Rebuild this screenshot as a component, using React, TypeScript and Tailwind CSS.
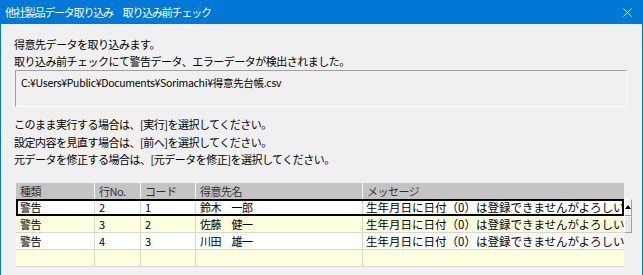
import { X } from 'lucide-react';

const rows = [
  { kind: '警告', line: '2', code: '1', name: '鈴木　一郎', msg: '生年月日に日付（0）は登録できませんがよろしい', selected: true },
  { kind: '警告', line: '3', code: '2', name: '佐藤　健一', msg: '生年月日に日付（0）は登録できませんがよろしい' },
  { kind: '警告', line: '4', code: '3', name: '川田　雄一', msg: '生年月日に日付（0）は登録できませんがよろしい' },
  { kind: '', line: '', code: '', name: '', msg: '' },
];

const font = { fontFamily: '"Noto Sans CJK JP", "Liberation Sans", sans-serif' };

export default function App() {
  return (
    <div className="w-[643px] h-[275px] overflow-hidden bg-[#0078d7] flex flex-col text-[11px] tracking-[-0.5px] text-black" style={font}>
      <div className="h-[24px] shrink-0 flex items-center justify-between pl-[5px] pr-[8px] text-white text-[11px] tracking-[-1.2px]">
        <span className="leading-none">他社製品データ取り込み　取り込み前チェック</span>
        <X className="w-[15px] h-[15px]" strokeWidth={1.5} />
      </div>
      <div className="flex-1 mx-[1px] bg-[#f0f0f0] pl-[13px] pr-[14px] pt-[12px] flex flex-col">
        <p className="leading-[17px]">得意先データを取り込みます。</p>
        <p className="leading-[17px]">取り込み前チェックにて警告データ、エラーデータが検出されました。</p>
        <div className="mt-0 ml-[1px] mr-[1px] h-[37px] border border-t-[#a0a0a0] border-l-[#a0a0a0] border-r-white border-b-white pl-[5px] pt-[4px] text-[10.5px] tracking-[-0.3px] leading-[15px]">
          C:¥Users¥Public¥Documents¥Sorimachi¥得意先台帳.csv
        </div>
        <div className="mt-[9px] flex flex-col leading-[17.5px]">
          <p>このまま実行する場合は、[実行]を選択してください。</p>
          <p>設定内容を見直す場合は、[前へ]を選択してください。</p>
          <p>元データを修正する場合は、[元データを修正]を選択してください。</p>
        </div>
        <div className="mt-[14px] ml-[2px] flex">
          <div className="w-[610px] flex flex-col">
            <div className="flex h-[16px] bg-[#c4c4c4] text-[#333]">
              <div className="w-[79px] pl-[4px] border-r border-r-[#f4f4f4] leading-[16px]">種類</div>
              <div className="w-[46px] pl-[4px] border-r border-r-[#f4f4f4] leading-[16px]">行No.</div>
              <div className="w-[55px] pl-[4px] border-r border-r-[#f4f4f4] leading-[16px]">コード</div>
              <div className="w-[167px] pl-[4px] border-r border-r-[#f4f4f4] leading-[16px]">得意先名</div>
              <div className="flex-1 pl-[4px] leading-[16px]">メッセージ</div>
            </div>
            {rows.map((r, i) => (
              <div
                key={i}
                className={`flex h-[17px] border-b border-b-[#d8d8d0] ${i % 2 === 1 ? 'bg-[#ffffe0]' : 'bg-white'} ${r.selected ? 'outline-2 outline-black -outline-offset-2' : ''}`}
              >
                <div className="w-[79px] pl-[4px] border-r border-r-[#d8d8d0] leading-[16px] whitespace-nowrap">{r.kind}</div>
                <div className="w-[46px] pl-[4px] border-r border-r-[#d8d8d0] leading-[16px]">{r.line}</div>
                <div className="w-[55px] pl-[4px] border-r border-r-[#d8d8d0] leading-[16px]">{r.code}</div>
                <div className="w-[167px] pl-[4px] border-r border-r-[#d8d8d0] leading-[16px] whitespace-nowrap">{r.name}</div>
                <div className="flex-1 pl-[3px] leading-[16px] text-[11.5px] tracking-[0px] whitespace-nowrap overflow-hidden">{r.msg}</div>
              </div>
            ))}
          </div>
          <div className="w-[15px] mt-[16px] flex flex-col">
            <div className="h-[17px] bg-[#f0f0f0] border border-t-white border-l-white border-r-[#a0a0a0] border-b-[#a0a0a0] flex items-center justify-center">
              <div className="w-0 h-0 border-l-[3px] border-r-[3px] border-b-[4px] border-l-transparent border-r-transparent border-b-black" />
            </div>
            <div className="h-[17px] bg-[#e8e8e8] border border-t-white border-l-white border-r-[#a0a0a0] border-b-[#a0a0a0]" />
            <div className="flex-1 bg-[#f0f0f0]" />
          </div>
        </div>
      </div>
    </div>
  );
}
